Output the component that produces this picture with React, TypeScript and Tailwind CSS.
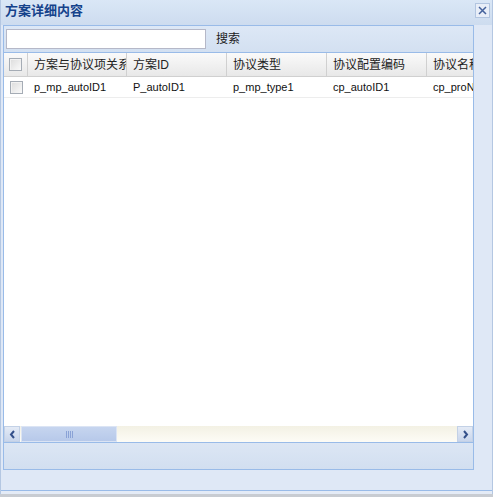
import React from 'react';

const columns = [
  { key: 'rel', title: '方案与协议项关系', width: 99 },
  { key: 'planId', title: '方案ID', width: 100 },
  { key: 'type', title: '协议类型', width: 100 },
  { key: 'code', title: '协议配置编码', width: 100 },
  { key: 'name', title: '协议名称', width: 100 },
];

const rows = [
  { rel: 'p_mp_autoID1', planId: 'P_autoID1', type: 'p_mp_type1', code: 'cp_autoID1', name: 'cp_proName1' },
];

const CheckBox: React.FC = () => (
  <div className="w-[13px] h-[13px] border border-[#a5acb5] bg-gradient-to-br from-[#dcdcdc] to-[#fafafa] shadow-[inset_1px_1px_0_#f2f2f2]" />
);

export default function App() {
  return (
    <div
      className="w-[493px] h-[497px] bg-[#c8ccd2] overflow-hidden"
      style={{ fontFamily: '"Liberation Sans", "Noto Sans CJK SC", sans-serif' }}
    >
      <div className="w-[493px] h-[494px] flex flex-col border-l border-r border-[#b4c7e2] bg-[#dfe8f6]">
        {/* title bar */}
        <div className="h-[25px] flex items-start justify-between pl-[4px] pr-[2px] pt-[3px] bg-gradient-to-b from-[#dae7f6] to-[#cddcef]">
          <span className="text-[13px] font-bold text-[#15428b] leading-[16px]">方案详细内容</span>
          <div className="w-[15px] h-[15px] border border-[#b2c5e0] bg-[#e8eef8] flex items-center justify-center">
            <svg width="9" height="9" viewBox="0 0 9 9">
              <path d="M1 1 L8 8 M8 1 L1 8" stroke="#45629c" strokeWidth="1.5" />
            </svg>
          </div>
        </div>

        {/* main panel */}
        <div className="ml-[2px] w-[471px] h-[445px] flex flex-col border border-[#99bbe8] bg-white">
          {/* toolbar */}
          <div className="h-[27px] flex items-center gap-[10px] pl-[2px] border-b border-[#99bbe8] bg-gradient-to-b from-[#dde8f6] to-[#d3e0f1]">
            <div className="w-[200px] h-[20px] bg-white border border-[#b5b8c8]" />
            <span className="text-[12px] text-[#222]">搜索</span>
          </div>

          {/* grid */}
          <div className="flex-1 overflow-hidden bg-white">
            <div className="flex h-[24px] border-b border-[#d0d0d0] bg-gradient-to-b from-[#fafafa] to-[#e8e8e8] whitespace-nowrap">
              <div className="w-[24px] shrink-0 flex items-center justify-center border-r border-[#d0d0d0]">
                <CheckBox />
              </div>
              {columns.map((c) => (
                <div
                  key={c.key}
                  className="shrink-0 flex items-center pl-[6px] border-r border-[#d0d0d0] overflow-hidden text-[12px] text-[#222]"
                  style={{ width: c.width }}
                >
                  {c.title}
                </div>
              ))}
            </div>
            {rows.map((r, i) => (
              <div key={i} className="flex h-[21px] border-b border-[#ededed] whitespace-nowrap">
                <div className="w-[24px] shrink-0 flex items-center justify-center">
                  <CheckBox />
                </div>
                {columns.map((c) => (
                  <div
                    key={c.key}
                    className="shrink-0 flex items-center pl-[6px] overflow-hidden text-[11px] text-[#111]"
                    style={{ width: c.width }}
                  >
                    {(r as any)[c.key]}
                  </div>
                ))}
              </div>
            ))}
          </div>

          {/* horizontal scrollbar */}
          <div className="h-[17px] flex items-center bg-gradient-to-b from-[#f3f1e4] to-[#fdfcf6] border-b border-[#99bbe8]">
            <div className="w-[16px] h-[16px] flex items-center justify-center border border-[#c3d1e6] bg-gradient-to-b from-[#e4ebf6] to-[#c9d6ec]">
              <svg width="7" height="9" viewBox="0 0 7 9">
                <path d="M5 1 L2 4.5 L5 8" fill="none" stroke="#34508a" strokeWidth="2" />
              </svg>
            </div>
            <div className="w-[96px] h-[16px] ml-[1px] flex items-center justify-center border border-[#dbe4f4] bg-gradient-to-b from-[#c6d5ef] to-[#b7c9ea]">
              <div className="flex gap-[1px]">
                <div className="w-[1px] h-[7px] bg-[#8aa2d6]" />
                <div className="w-[1px] h-[7px] bg-[#8aa2d6]" />
                <div className="w-[1px] h-[7px] bg-[#8aa2d6]" />
                <div className="w-[1px] h-[7px] bg-[#8aa2d6]" />
              </div>
            </div>
            <div className="flex-1" />
            <div className="w-[16px] h-[16px] flex items-center justify-center border border-[#c3d1e6] bg-gradient-to-b from-[#e4ebf6] to-[#c9d6ec]">
              <svg width="7" height="9" viewBox="0 0 7 9">
                <path d="M2 1 L5 4.5 L2 8" fill="none" stroke="#34508a" strokeWidth="2" />
              </svg>
            </div>
          </div>

          {/* bottom bar */}
          <div className="h-[26px] bg-gradient-to-b from-[#dce6f4] to-[#d2dff0]" />
        </div>

        {/* window footer */}
        <div className="h-[21px] border-b border-[#99bbe8] bg-[#dfe8f6]" />
        <div className="flex-1 bg-[#e4ebf6]" />
      </div>
    </div>
  );
}
